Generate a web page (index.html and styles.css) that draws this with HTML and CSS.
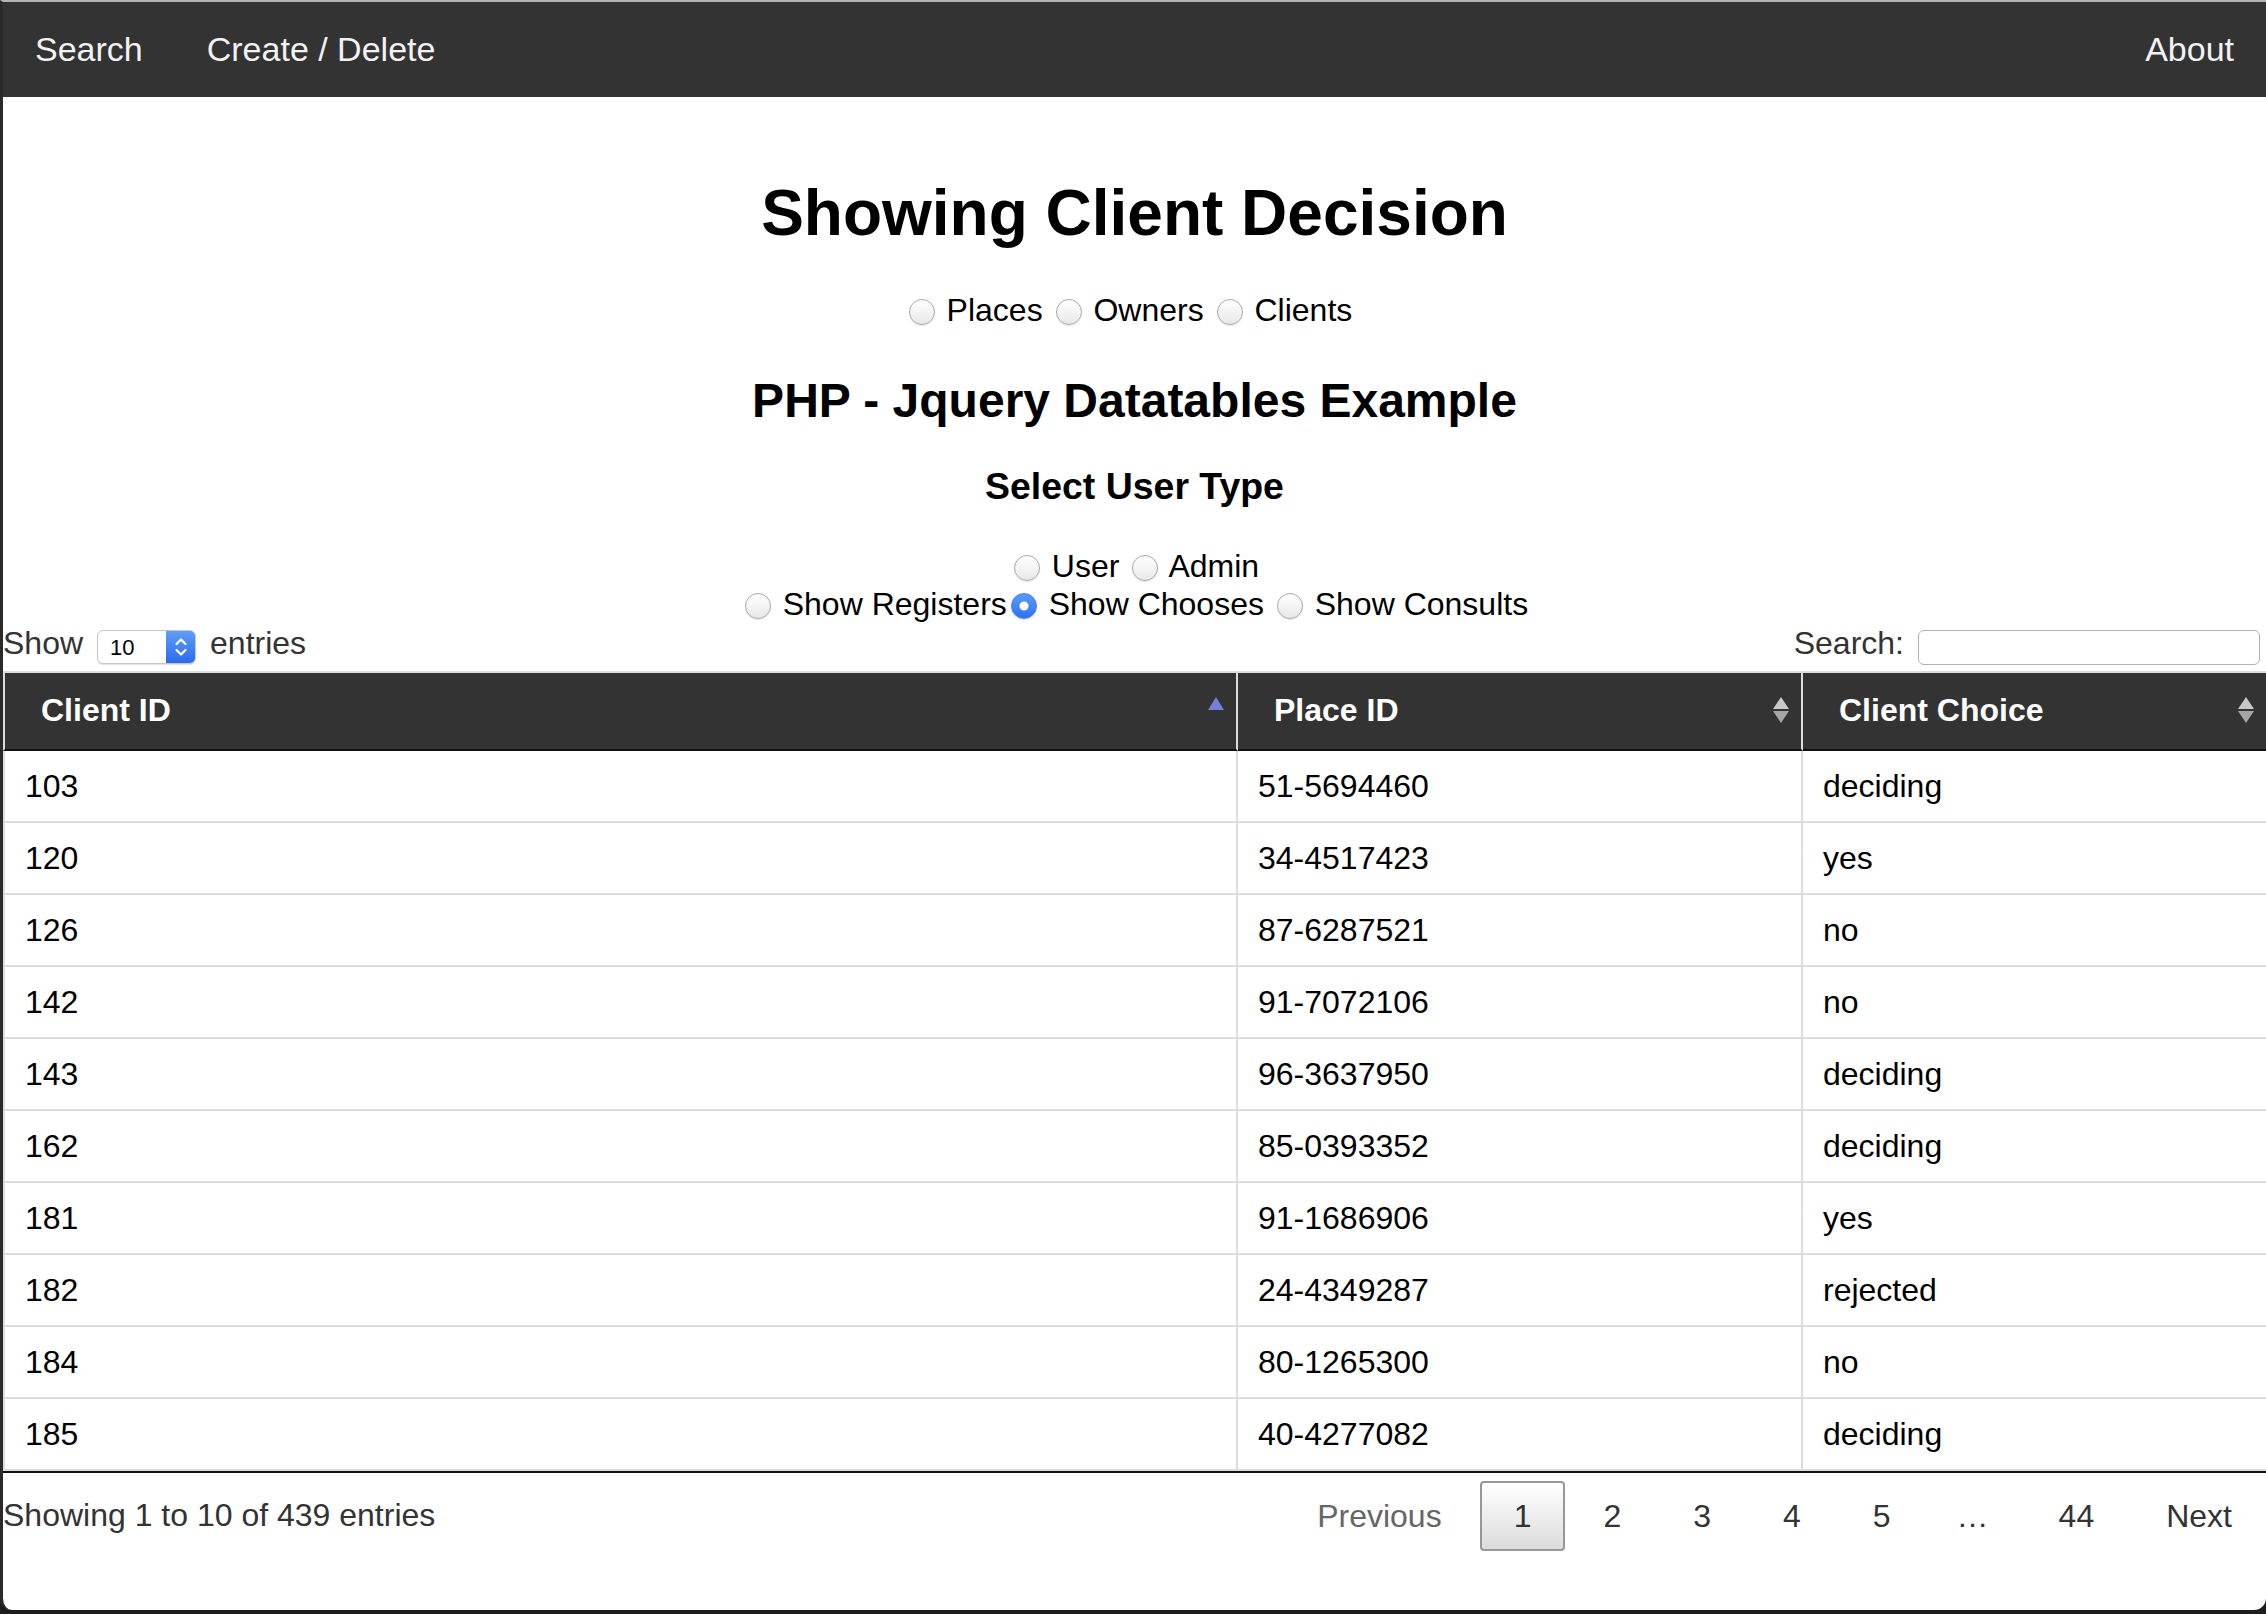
FILE: index.html
```html
<!DOCTYPE html>
<html lang="en">
<head>
<meta charset="utf-8">
<title>Showing Client Decision</title>
<link rel="stylesheet" href="styles.css">
</head>
<body>
<div class="window">
  <nav class="topnav">
    <div class="nav-left">
      <a href="#">Search</a>
      <a href="#">Create / Delete</a>
    </div>
    <a href="#">About</a>
  </nav>
  <main class="content">
    <h1 class="title">Showing Client Decision</h1>
    <div class="radio-row entity">
      <label><input class="radio" type="radio" name="entity"> Places</label>
      <label><input class="radio" type="radio" name="entity"> Owners</label>
      <label><input class="radio" type="radio" name="entity"> Clients</label>
    </div>
    <h2 class="subtitle">PHP - Jquery Datatables Example</h2>
    <h3 class="usertype">Select User Type</h3>
    <div class="radio-row tight first">
      <label><input class="radio" type="radio" name="utype"> User</label>
      <label><input class="radio" type="radio" name="utype"> Admin</label>
    </div>
    <div class="radio-row tight">
      <label><input class="radio" type="radio" name="show"> Show Registers</label><label><input class="radio" type="radio" name="show" checked> Show Chooses</label>
      <label><input class="radio" type="radio" name="show"> Show Consults</label>
    </div>

    <div class="dt-wrapper">
      <div class="dt-toolbar">
        <div class="dt-length">
          <span class="lbl">Show</span>
          <span class="length-select">
            <select aria-label="entries"><option>10</option><option>25</option><option>50</option><option>100</option></select>
            <span class="arrow">
              <svg width="14" height="22" viewBox="0 0 14 22"><path d="M2.5 8 L7 3.5 L11.5 8" fill="none" stroke="#fff" stroke-width="2.2" stroke-linecap="round" stroke-linejoin="round"/><path d="M2.5 14 L7 18.5 L11.5 14" fill="none" stroke="#fff" stroke-width="2.2" stroke-linecap="round" stroke-linejoin="round"/></svg>
            </span>
          </span>
          <span class="lbl">entries</span>
        </div>
        <div class="dt-filter">
          <span class="lbl">Search:</span>
          <input class="search-input" type="search" aria-label="Search">
        </div>
      </div>

      <table class="dt">
        <thead>
          <tr>
            <th class="c1">Client ID
              <svg class="sort" width="16" height="27" viewBox="0 0 16 27"><polygon points="8,0 16,13 0,13" fill="#777fd9"/></svg>
            </th>
            <th class="c2">Place ID
              <svg class="sort" width="16" height="27" viewBox="0 0 16 27"><polygon points="8,0 16,12 0,12" fill="#c8c8c8"/><polygon points="0,14 16,14 8,26" fill="#a6a6a6"/></svg>
            </th>
            <th class="c3">Client Choice
              <svg class="sort" width="16" height="27" viewBox="0 0 16 27"><polygon points="8,0 16,12 0,12" fill="#c8c8c8"/><polygon points="0,14 16,14 8,26" fill="#a6a6a6"/></svg>
            </th>
          </tr>
        </thead>
        <tbody>
          <tr><td>103</td><td>51-5694460</td><td>deciding</td></tr>
          <tr><td>120</td><td>34-4517423</td><td>yes</td></tr>
          <tr><td>126</td><td>87-6287521</td><td>no</td></tr>
          <tr><td>142</td><td>91-7072106</td><td>no</td></tr>
          <tr><td>143</td><td>96-3637950</td><td>deciding</td></tr>
          <tr><td>162</td><td>85-0393352</td><td>deciding</td></tr>
          <tr><td>181</td><td>91-1686906</td><td>yes</td></tr>
          <tr><td>182</td><td>24-4349287</td><td>rejected</td></tr>
          <tr><td>184</td><td>80-1265300</td><td>no</td></tr>
          <tr><td>185</td><td>40-4277082</td><td>deciding</td></tr>
        </tbody>
      </table>

      <div class="dt-footer">
        <div class="dt-info">Showing 1 to 10 of 439 entries</div>
        <div class="dt-paginate">
          <span class="pg disabled">Previous</span>
          <span class="pg current">1</span>
          <span class="pg">2</span>
          <span class="pg">3</span>
          <span class="pg">4</span>
          <span class="pg">5</span>
          <span class="ellipsis">…</span>
          <span class="pg">44</span>
          <span class="pg">Next</span>
        </div>
      </div>
    </div>
  </main>
</div>
</body>
</html>
```

FILE: styles.css
```css
* { box-sizing: border-box; }

html, body {
  margin: 0;
  padding: 0;
}

body {
  background: #1d1d1f;
  height: 1614px;
  overflow: hidden;
  font-family: "Liberation Sans", Arial, Helvetica, sans-serif;
  font-size: 32px;
  color: #000;
}

.window {
  height: 1610px;
  background: #fff;
  border-top: 2px solid #b3b3b3;
  border-left: 3px solid #2a2a2a;
  border-radius: 0 0 12px 12px;
  overflow: hidden;
}

/* Top navigation */
.topnav {
  display: flex;
  justify-content: space-between;
  background: #333;
}

.nav-left { display: flex; }

.topnav a {
  display: block;
  padding: 28px 32px;
  font-size: 34px;
  line-height: 39px;
  color: #f2f2f2;
  text-decoration: none;
}

/* Headings */
.title {
  margin: 79px 0 42px;
  font-size: 64px;
  line-height: 74px;
  font-weight: bold;
  text-align: center;
}

.subtitle {
  margin: 44px 0 0;
  font-size: 48px;
  line-height: 55px;
  font-weight: bold;
  text-align: center;
}

.usertype {
  margin: 37px 0 0;
  font-size: 37.44px;
  line-height: 43px;
  font-weight: bold;
  text-align: center;
}

/* Radio rows */
.radio-row {
  text-align: center;
  line-height: 37px;
}

.radio-row.entity { padding-right: 12px; }
.radio-row.tight { line-height: 38px; }
.radio-row.first { margin-top: 39px; }

.radio {
  -webkit-appearance: none;
  appearance: none;
  width: 26px;
  height: 26px;
  margin: 0 3px 0 4px;
  border: 1.5px solid #a9a9a9;
  border-radius: 50%;
  background: linear-gradient(#ffffff, #e8e8e8);
  box-shadow: 0 1px 1px rgba(0, 0, 0, 0.1);
  vertical-align: -4px;
}

.radio:checked {
  border-color: #3d7ff0;
  background:
    radial-gradient(circle, #ffffff 0 4px, rgba(255, 255, 255, 0) 5px),
    linear-gradient(#5b9cf8, #2f72ee);
}

/* DataTables toolbar */
.dt-toolbar {
  display: flex;
  justify-content: space-between;
  align-items: center;
  height: 48px;
  color: #333;
}

.dt-length,
.dt-filter {
  display: flex;
  align-items: center;
}

.lbl {
  line-height: 37px;
  margin-bottom: 7px;
}

.length-select {
  display: flex;
  width: 99px;
  height: 34px;
  margin: 0 14px;
  border: 1px solid #c6c6c6;
  border-radius: 6px;
  overflow: hidden;
  background: #fff;
  box-shadow: 0 1px 1px rgba(0, 0, 0, 0.12);
}

.length-select select {
  -webkit-appearance: none;
  appearance: none;
  flex: 1;
  min-width: 0;
  border: 0;
  padding: 0 0 0 12px;
  background: transparent;
  font-family: "Liberation Sans", Arial, sans-serif;
  font-size: 22px;
  color: #000;
  outline: none;
}

.length-select .arrow {
  display: flex;
  align-items: center;
  justify-content: center;
  width: 29px;
  background: linear-gradient(#5d9ef8, #2c6bee);
}

.search-input {
  width: 342px;
  height: 35px;
  margin: 0 6px 0 14px;
  border: 1.5px solid #b2b2b2;
  border-radius: 6px;
  background: #fff;
  font-size: 24px;
}

/* Table */
.dt {
  width: 100%;
  border-collapse: separate;
  border-spacing: 0;
  table-layout: fixed;
  border-bottom: 2px solid #111;
}

.dt th {
  position: relative;
  padding: 19px 36px 20px;
  line-height: 37px;
  background: #333;
  color: #fff;
  font-weight: bold;
  text-align: left;
  border-top: 2px solid #ddd;
  border-right: 2px solid #ddd;
  border-bottom: 2px solid #111;
}

.dt th:first-child { border-left: 2px solid #ddd; }
.dt th:last-child { border-right: none; }

.dt th.c1 { width: 1235px; }
.dt th.c2 { width: 565px; }

.sort {
  position: absolute;
  top: 24px;
  right: 12px;
}

.dt td {
  padding: 16px 20px;
  line-height: 38px;
  border-right: 2px solid #ddd;
  border-bottom: 2px solid #ddd;
}

.dt td:first-child { border-left: 2px solid #ddd; }
.dt td:last-child { border-right: none; }

/* Footer: info + pagination */
.dt-footer {
  display: flex;
  justify-content: space-between;
  align-items: flex-start;
  color: #333;
}

.dt-info {
  padding-top: 24px;
  line-height: 37px;
}

.dt-paginate {
  display: flex;
  padding-top: 8px;
}

.pg {
  margin-left: 4px;
  padding: 16px 32px;
  line-height: 34px;
  border: 2px solid transparent;
  border-radius: 4px;
  color: #333;
}

.pg.disabled { color: #666; }

.pg.current {
  border-color: #979797;
  background: linear-gradient(#ffffff, #dcdcdc);
}

.ellipsis {
  padding: 16px 30px;
  line-height: 34px;
  border: 2px solid transparent;
  color: #333;
}
```
